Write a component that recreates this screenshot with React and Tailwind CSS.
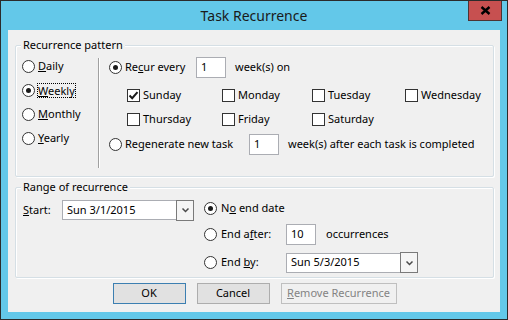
import React from "react";

function Radio({ checked }) {
  return (
    <span className="w-[13px] h-[13px] shrink-0 rounded-full border border-[#333333] bg-white flex items-center justify-center">
      {checked && <span className="w-[5px] h-[5px] rounded-full bg-[#1a1a1a]" />}
    </span>
  );
}

function Check({ checked }) {
  return (
    <span className="w-[13px] h-[13px] shrink-0 border border-[#333333] bg-white flex items-center justify-center">
      {checked && (
        <svg width="11" height="11" viewBox="0 0 11 11">
          <path d="M1.5 5.5 L4.2 8.2 L9.5 2.2" fill="none" stroke="#1a1a1a" strokeWidth="2" />
        </svg>
      )}
    </span>
  );
}

function Input({ value, w }) {
  return (
    <div className={`${w} h-[21px] shrink-0 border border-[#abadb3] bg-white pl-[4px] flex items-center text-black`}>
      {value}
    </div>
  );
}

function Combo({ value }) {
  return (
    <div className="flex items-center h-[20px]">
      <div className="w-[115px] h-[20px] border border-[#abadb3] bg-white pl-[4px] flex items-center text-black">
        {value}
      </div>
      <div className="-ml-px w-[18px] h-[21px] border border-[#7a7a7a] bg-[#f5f5f5] flex items-center justify-center">
        <svg width="9" height="6" viewBox="0 0 9 6">
          <path d="M1.5 1.5 L4.5 4.5 L7.5 1.5" fill="none" stroke="#4a4a4a" strokeWidth="1.5" />
        </svg>
      </div>
    </div>
  );
}

function Group({ title, className, children }) {
  return (
    <div className={`relative border border-[#d5dfe5] rounded-[2px] shadow-[inset_1px_1px_0_#ffffff,1px_1px_0_#ffffff] ${className}`}>
      <span className="absolute top-[-9px] left-[5px] px-[2px] bg-[#f0f0f0] leading-[16px] text-black">{title}</span>
      {children}
    </div>
  );
}

function DayCheck({ label, checked }) {
  return (
    <div className="flex items-center h-[24px]">
      <Check checked={checked} />
      <span className="ml-[3px]">{label}</span>
    </div>
  );
}

export default function App() {
  return (
    <div className="w-[508px] h-[320px] bg-[#63c8e9] border border-[#2b2b2b] flex flex-col overflow-hidden font-['Noto_Sans',sans-serif] text-[11px] text-black">
      <div className="relative h-[29px] flex items-center justify-center shrink-0">
        <span className="text-[14px] leading-[20px] text-[#1a1a1a]">Task Recurrence</span>
        <div className="absolute right-[5px] top-[-1px] w-[34px] h-[21px] bg-[#c75050] border border-[#4d3333] flex items-center justify-center">
          <svg width="11" height="9" viewBox="0 0 11 9">
            <path d="M1.5 1 L9.5 8 M9.5 1 L1.5 8" stroke="#000" strokeWidth="2.4" />
          </svg>
        </div>
      </div>

      <div className="mx-[7px] h-[282px] bg-[#f0f0f0] pt-[15px] pl-[7px] pr-[6px] flex flex-col">
        <Group title="Recurrence pattern" className="h-[132px] flex">
          <div className="w-[82px] pl-[6px] pt-[8px] flex flex-col">
            <div className="flex items-center h-[24px]">
              <Radio />
              <span className="ml-[3px]"><u>D</u>aily</span>
            </div>
            <div className="flex items-center h-[24px]">
              <Radio checked />
              <span className="ml-[3px] inline-block leading-[13px] outline outline-1 outline-dotted outline-black"><u>W</u>eekly</span>
            </div>
            <div className="flex items-center h-[24px]">
              <Radio />
              <span className="ml-[3px]"><u>M</u>onthly</span>
            </div>
            <div className="flex items-center h-[24px]">
              <Radio />
              <span className="ml-[3px]"><u>Y</u>early</span>
            </div>
          </div>
          <div className="mt-[12px] h-[110px] w-px bg-[#a0a0a0] shadow-[1px_0_0_#ffffff]" />
          <div className="ml-[10px] pt-[11px] flex flex-col">
            <div className="flex items-center h-[21px]">
              <Radio checked />
              <span className="ml-[3px] w-[71px]">Re<u>c</u>ur every</span>
              <Input value="1" w="w-[30px]" />
              <span className="ml-[9px]">week(s) on</span>
            </div>
            <div className="ml-[18px] mt-[5px] grid grid-cols-[95px_90px_93px_auto]">
              <DayCheck label="Sunday" checked />
              <DayCheck label="Monday" />
              <DayCheck label="Tuesday" />
              <DayCheck label="Wednesday" />
              <DayCheck label="Thursday" />
              <DayCheck label="Friday" />
              <DayCheck label="Saturday" />
            </div>
            <div className="flex items-center h-[21px] mt-[3px]">
              <Radio />
              <span className="ml-[3px] w-[124px]">Re<u>g</u>enerate new task</span>
              <Input value="1" w="w-[30px]" />
              <span className="ml-[9px]">week(s) after each task is completed</span>
            </div>
          </div>
        </Group>

        <Group title="Range of recurrence" className="mt-[10px] h-[91px] flex">
          <div className="pl-[7px] pt-[12px] flex items-start">
            <div className="flex items-center h-[20px]">
              <span className="w-[39px]"><u>S</u>tart:</span>
              <Combo value="Sun 3/1/2015" />
            </div>
          </div>
          <div className="ml-[10px] pt-[10px] flex flex-col">
            <div className="flex items-center h-[21px]">
              <Radio checked />
              <span className="ml-[4px]">N<u>o</u> end date</span>
            </div>
            <div className="flex items-center h-[21px] mt-[5px]">
              <Radio />
              <span className="ml-[4px] w-[65px]">End a<u>f</u>ter:</span>
              <Input value="10" w="w-[30px]" />
              <span className="ml-[10px]">occurrences</span>
            </div>
            <div className="flex items-center h-[21px] mt-[7px]">
              <Radio />
              <span className="ml-[4px] w-[65px]">End <u>b</u>y:</span>
              <Combo value="Sun 5/3/2015" />
            </div>
          </div>
        </Group>

        <div className="mt-[5px] flex justify-center gap-[11px]">
          <div className="w-[73px] h-[21px] bg-[#e1e1e1] border border-[#3c7fb1] flex items-center justify-center">OK</div>
          <div className="w-[73px] h-[21px] bg-[#e1e1e1] border border-[#adadad] flex items-center justify-center">Cancel</div>
          <div className="w-[116px] h-[21px] bg-[#f0f0f0] border border-[#bfbfbf] text-[#838383] flex items-center justify-center"><u>R</u>emove Recurrence</div>
        </div>
      </div>
    </div>
  );
}
